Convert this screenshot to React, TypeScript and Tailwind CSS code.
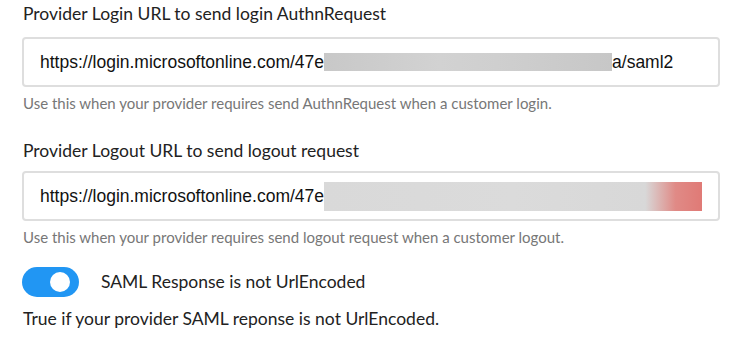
export default function App() {
  const label = "text-[17.5px] leading-[22px] text-[#222] [font-family:Lato,'Open_Sans',sans-serif]";
  const help = "text-[15px] leading-[18px] text-[#777] [font-family:Lato,'Open_Sans',sans-serif]";
  return (
    <div className="w-[751px] h-[341px] bg-white pl-[22px] pt-[3px] overflow-hidden">
      <div className={label + " pl-[1px]"}>Provider Login URL to send login AuthnRequest</div>
      <div className="mt-[12px] w-[698px] h-[50px] border-2 border-[#dedede] rounded-[4px] flex items-center pl-[16px] [font-family:'Liberation_Sans',Arial,sans-serif] text-[17.5px] text-[#111]">
        <span>https://login.microsoftonline.com/47e</span>
        <span className="inline-block w-[288px] h-[18px] bg-[linear-gradient(90deg,#c8c8c8_0%,#d2d2d2_40%,#cfcfcf_60%,#c7c7c7_100%)]"></span>
        <span>a/saml2</span>
      </div>
      <div className={help + " mt-[7px] pl-[1px]"}>Use this when your provider requires send AuthnRequest when a customer login.</div>

      <div className={label + " mt-[28px] pl-[1px]"}>Provider Logout URL to send logout request</div>
      <div className="mt-[9px] w-[698px] h-[50px] border-2 border-[#dedede] rounded-[4px] flex items-center pl-[16px] [font-family:'Liberation_Sans',Arial,sans-serif] text-[17.5px] text-[#111]">
        <span>https://login.microsoftonline.com/47e</span>
        <span className="inline-block w-[378px] h-[29px] bg-[linear-gradient(90deg,#d9d9d9_0%,#dbdbdb_50%,#d8d8d8_85%,#e08a86_93%,#e07a76_100%)]"></span>
      </div>
      <div className={help + " mt-[7px] pl-[1px]"}>Use this when your provider requires send logout request when a customer logout.</div>

      <div className="mt-[21px] flex items-center">
        <div className="w-[57px] h-[30px] rounded-full bg-[#2196f3] flex items-center justify-end pr-[9px]">
          <div className="w-[20px] h-[20px] rounded-full bg-white"></div>
        </div>
        <div className={label + " ml-[22px]"}>SAML Response is not UrlEncoded</div>
      </div>
      <div className={label + " mt-[11px] pl-[1px]"}>True if your provider SAML reponse is not UrlEncoded.</div>
    </div>
  );
}
